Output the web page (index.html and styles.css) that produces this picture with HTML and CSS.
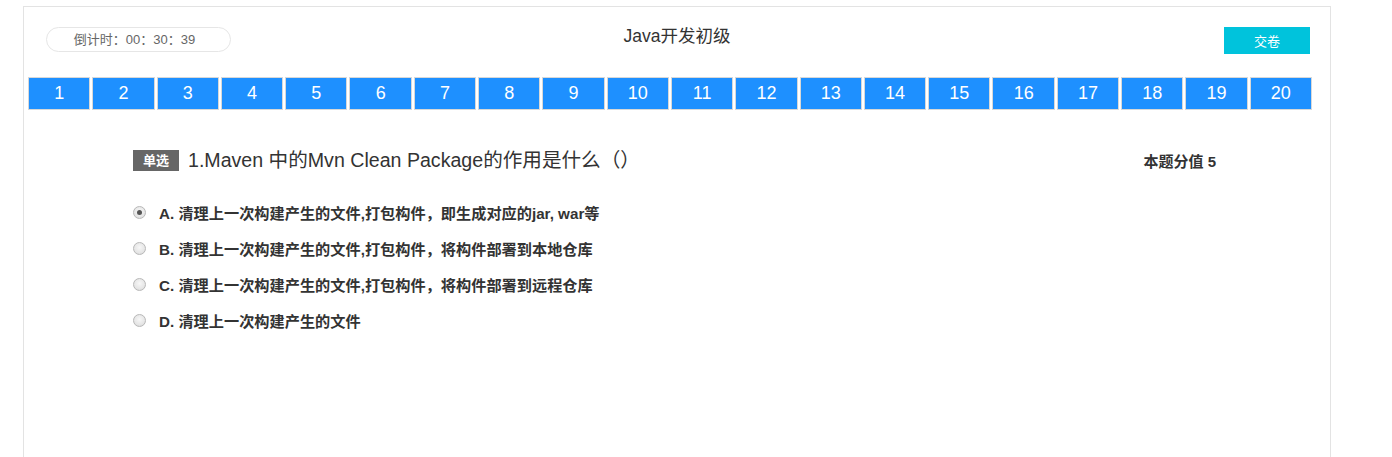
FILE: index.html
```html
<!DOCTYPE html>
<html lang="zh-CN">
<head>
<meta charset="utf-8">
<title>Java开发初级</title>
<link rel="stylesheet" href="styles.css">
</head>
<body>
<div class="exam">
  <div class="exam-header">
    <div class="timer">倒计时：00：30：39</div>
    <div class="title">Java开发初级</div>
    <div class="actions"><button class="submit" type="button">交卷</button></div>
  </div>
  <ul class="nav">
    <li>1</li><li>2</li><li>3</li><li>4</li><li>5</li>
    <li>6</li><li>7</li><li>8</li><li>9</li><li>10</li>
    <li>11</li><li>12</li><li>13</li><li>14</li><li>15</li>
    <li>16</li><li>17</li><li>18</li><li>19</li><li>20</li>
  </ul>
  <div class="question">
    <div class="q-head">
      <span class="tag">单选</span>
      <span class="q-text">1.Maven 中的Mvn Clean Package的作用是什么（）</span>
      <span class="score">本题分值 5</span>
    </div>
    <ul class="options">
      <li><label class="option"><input class="radio" type="radio" name="q1" checked><span>A. 清理上一次构建产生的文件,打包构件，即生成对应的jar, war等</span></label></li>
      <li><label class="option"><input class="radio" type="radio" name="q1"><span>B. 清理上一次构建产生的文件,打包构件，将构件部署到本地仓库</span></label></li>
      <li><label class="option"><input class="radio" type="radio" name="q1"><span>C. 清理上一次构建产生的文件,打包构件，将构件部署到远程仓库</span></label></li>
      <li><label class="option"><input class="radio" type="radio" name="q1"><span>D. 清理上一次构建产生的文件</span></label></li>
    </ul>
  </div>
</div>
</body>
</html>
```

FILE: styles.css
```css
* { box-sizing: border-box; }

html, body {
  margin: 0;
  padding: 0;
  background: #fff;
}

body {
  font-family: "Liberation Sans", Arial, "Noto Sans CJK SC", sans-serif;
  color: #333;
  overflow: hidden;
}

.exam {
  margin: 6px 0 0 23px;
  width: 1308px;
  min-height: 520px;
  border: 1px solid #e3e3e3;
  border-bottom: none;
}

.exam-header {
  display: grid;
  grid-template-columns: 1fr auto 1fr;
  align-items: start;
  padding-top: 20px;
}

.timer {
  justify-self: start;
  margin-left: 22px;
  width: 185px;
  height: 25px;
  border: 1px solid #e6e6e6;
  border-radius: 13px;
  font-size: 13px;
  line-height: 23px;
  color: #666;
  text-align: center;
  padding-right: 8px;
}

.title {
  font-size: 17.5px;
  line-height: 19px;
  color: #333;
}

.actions {
  justify-self: end;
  margin-right: 20px;
}

.submit {
  display: block;
  width: 86px;
  height: 27px;
  border: none;
  margin: 0;
  padding: 0;
  background: #00c3dc;
  color: #fff;
  font-family: "Liberation Sans", "Noto Sans CJK SC", sans-serif;
  font-size: 13px;
  cursor: pointer;
}

.nav {
  list-style: none;
  margin: 23px 0 0 4px;
  padding: 0;
  width: 1284px;
  display: grid;
  grid-template-columns: repeat(20, 1fr);
  gap: 2px;
}

.nav li {
  height: 33px;
  border: 1px solid #d8d8d8;
  background: #1e90ff;
  color: #fff;
  font-size: 18px;
  line-height: 31px;
  text-align: center;
}

.question {
  margin-top: 39px;
}

.q-head {
  display: flex;
  align-items: center;
  height: 22px;
  padding: 0 114px 0 109px;
}

.tag {
  display: inline-block;
  height: 21px;
  padding: 0 10px;
  background: #666;
  color: #fff;
  font-size: 13px;
  font-weight: bold;
  line-height: 21px;
  margin-right: 9px;
}

.q-text {
  font-size: 19.6px;
  line-height: 22px;
  color: #333;
}

.score {
  margin-left: auto;
  font-size: 15px;
  font-weight: bold;
  color: #333;
}

.options {
  list-style: none;
  margin: 23px 0 0 0;
  padding: 0 0 0 109px;
}

.option {
  display: flex;
  align-items: center;
  height: 36px;
  font-size: 15.2px;
  font-weight: bold;
  color: #333;
  cursor: pointer;
}

.radio {
  appearance: none;
  -webkit-appearance: none;
  width: 13px;
  height: 13px;
  margin: 0 13px 0 0;
  border: 1px solid #b8b8b8;
  border-radius: 50%;
  background: radial-gradient(circle at 50% 40%, #f7f7f7 0%, #e6e6e6 60%, #d6d6d6 100%);
  position: relative;
  flex: none;
}

.radio:checked::after {
  content: "";
  position: absolute;
  left: 3px;
  top: 3px;
  width: 5px;
  height: 5px;
  border-radius: 50%;
  background: #555;
}
```
